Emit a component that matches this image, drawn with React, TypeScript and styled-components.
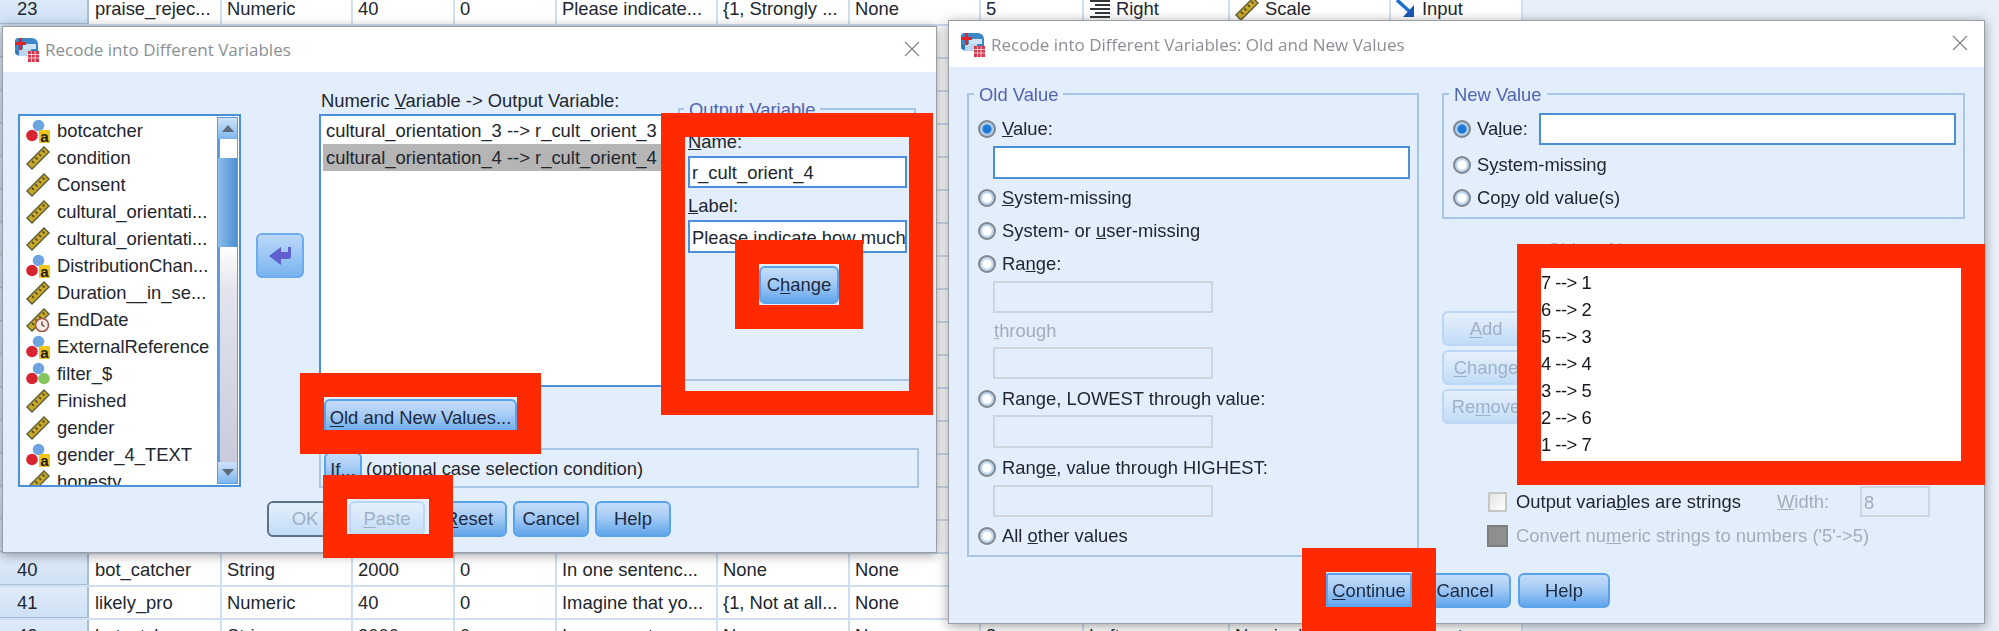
import React from 'react';
import styled, { createGlobalStyle } from 'styled-components';

const GlobalStyle = createGlobalStyle`
  html, body {
    margin: 0;
    padding: 0;
    background: #e7eff9;
    overflow: hidden;
  }
  * { box-sizing: border-box; }
`;

const FONT = `"Liberation Sans", Arial, sans-serif`;

const Canvas = styled.div`
  position: relative;
  width: 1999px;
  height: 631px;
  overflow: hidden;
  font-family: ${FONT};
  font-size: 18.4px;
  color: #22262e;
  background: #e7eff9;
`;

const Scene = styled.div`
  position: absolute;
  inset: 0;
  filter: blur(0.45px);
`;

/* data view behind the dialogs */
const Sheet = styled.div`
  margin-top: -7px;
  width: 1523px;
  background: #fff;
`;

const SheetRow = styled.div`
  display: grid;
  grid-template-columns: 90px 132px 131px 102px 102px 161px 132px 131px 103px 146px 161px 132px;
  height: 33px;
  border-bottom: 2px solid #cfdff1;
`;

const RowHead = styled.div`
  display: flex;
  align-items: center;
  padding: 1px 0 0 17px;
  background: linear-gradient(#e0ebf9, #cfe1f6);
  border-right: 2px solid #a9bfd8;
  border-bottom: 1px solid #a9bfd8;
  margin-right: 1px;
`;

const Cell = styled.div`
  display: flex;
  align-items: center;
  gap: 6px;
  padding: 1px 0 0 5px;
  border-right: 2px solid #cfdff1;
  white-space: nowrap;
  overflow: hidden;
`;

/* dialog windows */
const Window = styled.div<{ $x: number; $y: number; $w: number; $h: number }>`
  position: absolute;
  left: ${(p) => p.$x}px;
  top: ${(p) => p.$y}px;
  width: ${(p) => p.$w}px;
  height: ${(p) => p.$h}px;
  display: flex;
  flex-direction: column;
  background: #e2eefb;
  border: 1px solid #9a9fa6;
  box-shadow: 0 2px 11px rgba(0, 0, 0, 0.38);
`;

const TitleBar = styled.div<{ $h: number }>`
  position: relative;
  display: flex;
  align-items: center;
  flex: none;
  gap: 6px;
  height: ${(p) => p.$h}px;
  padding-left: 11px;
  background: #fff;
`;

const TitleText = styled.span`
  font-family: "Open Sans", ${FONT};
  font-size: 17px;
  color: #8b8f95;
  white-space: nowrap;
`;

const CloseBox = styled.svg`
  position: absolute;
  right: 16px;
  top: 14px;
  width: 16px;
  height: 16px;
`;

const Icon = styled.svg`
  flex: none;
`;

const Body = styled.div<{ $pad: string }>`
  flex: 1;
  display: flex;
  flex-direction: column;
  padding: ${(p) => p.$pad};
`;

const Columns = styled.div<{ $gap?: number; $top?: number }>`
  display: flex;
  align-items: flex-start;
  gap: ${(p) => p.$gap ?? 0}px;
  margin-top: ${(p) => p.$top ?? 0}px;
`;

const ButtonRow = styled.div<{ $top: number; $left: number; $gap: number }>`
  display: flex;
  gap: ${(p) => p.$gap}px;
  margin-top: ${(p) => p.$top}px;
  padding-left: ${(p) => p.$left}px;
`;

/* buttons */
const Btn = styled.div<{ $w: number; $h: number; $off?: boolean; $square?: boolean; $dark?: boolean; $m?: string }>`
  display: flex;
  align-items: center;
  justify-content: center;
  flex: none;
  width: ${(p) => p.$w}px;
  height: ${(p) => p.$h}px;
  margin: ${(p) => p.$m ?? '0'};
  border-radius: ${(p) => (p.$square ? 2 : 6)}px;
  border: 2px solid ${(p) => (p.$dark ? '#5e7287' : p.$off ? '#bcd7f4' : '#5aa2ea')};
  background: ${(p) =>
    p.$off
      ? 'linear-gradient(#e6f0fb, #c2dcf7)'
      : 'linear-gradient(#c3dcfa 0%, #a9cdf6 40%, #62a6ea 100%)'};
  color: ${(p) => (p.$off ? '#9eb0c5' : '#1d2a40')};
  white-space: nowrap;
  u { text-underline-offset: 2px; }
`;

/* variable list with scrollbar */
const VarBox = styled.div`
  display: flex;
  flex: none;
  width: 223px;
  height: 373px;
  margin-top: 24px;
  background: #fff;
  border: 2px solid #4a8fd8;
`;

const VarItems = styled.div`
  flex: 1;
  min-width: 0;
  padding: 1px 0 0 6px;
  overflow: hidden;
`;

const VarItem = styled.div`
  display: flex;
  align-items: center;
  gap: 7px;
  height: 27px;
  white-space: nowrap;
`;

const Scrollbar = styled.div`
  display: flex;
  flex-direction: column;
  flex: none;
  width: 21px;
  margin: 1px 1px 1px 0;
  border: 1px solid #5c9ddf;
`;

const ScrollEnd = styled.div`
  display: flex;
  align-items: center;
  justify-content: center;
  flex: none;
  height: 21px;
  background: linear-gradient(#cfe3fa, #7db6ee);
`;

const ScrollSpace = styled.div<{ $h: number }>`
  flex: none;
  height: ${(p) => p.$h}px;
  background: #fff;
  border-left: 2px solid #5c9ddf;
`;

const ScrollThumb = styled.div`
  flex: none;
  height: 89px;
  background: linear-gradient(90deg, #8cbcea, #4e90d2);
`;

const ScrollRest = styled.div`
  flex: 1;
  background: linear-gradient(#fff 0%, #e3e4ee 20%, #c9cbdc 100%);
  border-left: 2px solid #5c9ddf;
`;

const TriUp = styled.div`
  width: 0;
  height: 0;
  border-left: 6px solid transparent;
  border-right: 6px solid transparent;
  border-bottom: 7px solid #5f6a78;
`;

const TriDown = styled(TriUp)`
  border-bottom: 0;
  border-top: 7px solid #5f6a78;
`;

const ArrowButton = styled.div`
  display: flex;
  align-items: center;
  justify-content: center;
  flex: none;
  width: 48px;
  height: 45px;
  margin: 143px 15px 0;
  border-radius: 6px;
  border: 2px solid #6cabec;
  background: linear-gradient(#bcd8f9, #79b4ef);
`;

const RightPane = styled.div`
  display: flex;
  flex-direction: column;
  width: 600px;
`;

const PaneTop = styled.div`
  display: flex;
  gap: 10px;
`;

const TargetCol = styled.div`
  display: flex;
  flex-direction: column;
  width: 349px;
`;

const FieldLabel = styled.div<{ $top?: number; $left?: number; $off?: boolean }>`
  height: 22px;
  line-height: 22px;
  margin-top: ${(p) => p.$top ?? 0}px;
  margin-left: ${(p) => p.$left ?? 0}px;
  white-space: nowrap;
  color: ${(p) => (p.$off ? '#a3adba' : 'inherit')};
`;

const ListBox = styled.div<{ $h: number; $top?: number }>`
  flex: none;
  height: ${(p) => p.$h}px;
  margin-top: ${(p) => p.$top ?? 2}px;
  padding: 1px 2px;
  background: #fff;
  border: 2px solid #4a8fd8;
`;

const RecodeList = styled.div`
  flex: none;
  width: 424px;
  height: 197px;
  padding: 2px;
  background: #fff;
`;

const ListRow = styled.div<{ $sel?: boolean }>`
  height: 27px;
  line-height: 27px;
  padding-left: 3px;
  white-space: nowrap;
  background: ${(p) => (p.$sel ? '#b5b5b5' : 'transparent')};
`;

const RecodeRow = styled.div`
  height: 27px;
  line-height: 27px;
  letter-spacing: -0.5px;
  white-space: nowrap;
  color: #14171c;
`;

const Group = styled.fieldset<{ $w: number; $h: number; $top?: number; $left: number }>`
  flex: none;
  display: flex;
  flex-direction: column;
  width: ${(p) => p.$w}px;
  height: ${(p) => p.$h}px;
  margin: ${(p) => p.$top ?? 0}px 0 0;
  padding: 8px 7px 0 ${(p) => p.$left}px;
  min-width: 0;
  border: 2px solid #a8c6e8;
`;

const Legend = styled.legend`
  height: 20px;
  line-height: 21px;
  margin-left: -4px;
  padding: 0 5px;
  color: #5163b3;
`;

const TextBox = styled.div<{ $w: number; $h: number; $top?: number; $left?: number | 'auto'; $off?: boolean }>`
  flex: none;
  width: ${(p) => p.$w}px;
  height: ${(p) => p.$h}px;
  margin-top: ${(p) => p.$top ?? 0}px;
  margin-left: ${(p) => (p.$left === 'auto' ? 'auto' : `${p.$left ?? 0}px`)};
  padding-left: 2px;
  line-height: ${(p) => p.$h - 2}px;
  overflow: hidden;
  white-space: nowrap;
  color: ${(p) => (p.$off ? '#a3adba' : 'inherit')};
  background: ${(p) => (p.$off ? 'transparent' : '#fff')};
  border: 2px solid ${(p) => (p.$off ? '#cfd5dc' : '#4a8fd8')};
`;

const IfRow = styled.div`
  display: flex;
  align-items: stretch;
  gap: 4px;
  height: 40px;
  margin-top: 12px;
  padding: 2px 0 0 3px;
  border: 2px solid #a8c6e8;
`;

const IfText = styled.span`
  line-height: 34px;
  white-space: nowrap;
`;

/* radios and checks */
const Option = styled.div<{ $top?: number }>`
  display: flex;
  align-items: center;
  gap: 6px;
  flex: none;
  height: 33px;
  margin-top: ${(p) => p.$top ?? 0}px;
  white-space: nowrap;
`;

const Radio = styled.span<{ $on?: boolean }>`
  flex: none;
  width: 18px;
  height: 18px;
  border-radius: 50%;
  border: 2px solid #7f868e;
  background: ${(p) =>
    p.$on
      ? 'radial-gradient(circle, #1f78d6 0 4px, #a9cdf2 5px, #bfc6ce 100%)'
      : 'radial-gradient(circle, #fff 0 4px, #bcd7f2 5.5px, #c4cad1 100%)'};
`;

const Check = styled.span<{ $off?: boolean }>`
  display: block;
  width: ${(p) => (p.$off ? 21 : 19)}px;
  height: ${(p) => (p.$off ? 22 : 20)}px;
  margin-left: ${(p) => (p.$off ? -1 : 0)}px;
  border: 2px solid ${(p) => (p.$off ? '#7d7d7d' : '#c6c6c6')};
  background: ${(p) => (p.$off ? '#8f8f8f' : 'linear-gradient(135deg, #e4e4e4, #fff)')};
`;

const CheckRow = styled.div<{ $top?: number }>`
  display: grid;
  grid-template-columns: 28px 261px 83px 70px;
  align-items: center;
  margin-top: ${(p) => p.$top ?? 0}px;
  padding-left: 46px;
  white-space: nowrap;
`;

const StackedButtons = styled.div`
  display: flex;
  flex-direction: column;
  flex: none;
  gap: 4px;
  padding-top: 67px;
`;

const RecodeCol = styled.div`
  display: flex;
  flex-direction: column;
  flex: none;
  margin-left: 9px;
`;

const PeekLabel = styled(FieldLabel)`
  margin: -5px 0 6px 8px;
`;

const RightStack = styled.div`
  display: flex;
  flex-direction: column;
`;

const RedFrame = styled.div<{ $x: number; $y: number; $w: number; $h: number }>`
  position: absolute;
  left: ${(p) => p.$x}px;
  top: ${(p) => p.$y}px;
  width: ${(p) => p.$w}px;
  height: ${(p) => p.$h}px;
  border: 24px solid #ff2a00;
`;

/* icons */
const AppIcon = () => (
  <Icon width="25" height="25" viewBox="0 0 25 25">
    <path d="M3 1h15a6 6 0 0 1 6 6v12H6a5 5 0 0 1-5-5V3z" fill="#3f88c8" />
    <path d="M1 13h23v4H8l-7 0z" fill="#2c6ea8" opacity=".6" />
    <rect x="9" y="7" width="13" height="5" fill="#cfe2f3" />
    <rect x="5" y="12" width="12" height="7" fill="#bcd6ee" />
    <path d="M5 1h3v4h4v3H8v5H5V8H1V5h4z" fill="#e0232b" />
    <rect x="14" y="14" width="11" height="11" fill="#d8344a" />
    <path d="M14 17.5h11M14 21h11M17.5 14v11M21 14v11" stroke="#f5c4cc" strokeWidth="1" />
  </Icon>
);

const RulerIcon = ({ clock }: { clock?: boolean }) => (
  <Icon width="24" height="24" viewBox="0 0 24 24">
    <path d="M1 18 18 1l5 5L6 23z" fill="#c8a92a" stroke="#5c5a35" strokeWidth="1.4" />
    <path d="M6 15l2 2M9.5 11.5l2 2M13 8l2 2M16.5 4.5l2 2" stroke="#3f3d22" strokeWidth="1.5" />
    {clock && (
      <g>
        <circle cx="16" cy="17" r="6.5" fill="#f3ece6" stroke="#a2564a" strokeWidth="1.5" />
        <path d="M16 13.5V17l2.5 1.5" stroke="#5a2b26" strokeWidth="1.2" fill="none" />
      </g>
    )}
  </Icon>
);

const BallsIcon = ({ numeric }: { numeric?: boolean }) => (
  <Icon width="24" height="24" viewBox="0 0 24 24">
    <circle cx="12.5" cy="6.5" r="5.8" fill="#6ea4e0" />
    <circle cx="6" cy="16.5" r="5.8" fill="#d7242f" />
    {numeric ? (
      <circle cx="18" cy="16.5" r="5.8" fill="#86c45f" />
    ) : (
      <g>
        <rect x="13" y="11" width="11" height="13" rx="1" fill="#f0c419" />
        <text x="18.5" y="22.5" textAnchor="middle" fontSize="15" fontWeight="700" fontFamily={FONT} fill="#1b1b1b">
          a
        </text>
      </g>
    )}
  </Icon>
);

const AlignRightIcon = () => (
  <Icon width="21" height="20" viewBox="0 0 21 20">
    <path d="M1 2h20M6 6h15M1 10h20M6 14h15M1 18h20" stroke="#33363a" strokeWidth="2.2" />
  </Icon>
);

const InputIcon = () => (
  <Icon width="20" height="20" viewBox="0 0 20 20">
    <path d="M1 1l12 11" stroke="#1f6fd0" strokeWidth="3.4" />
    <path d="M18 6v12H7z" fill="#1559b5" />
  </Icon>
);

const BackArrow = () => (
  <Icon width="24" height="20" viewBox="0 0 24 20">
    <path d="M1 10 13 1v5h7V1h3v9c0 2-1 3-3 3h-7v6z" fill="#5f5fcf" />
  </Icon>
);

const CloseIcon = () => (
  <CloseBox viewBox="0 0 16 16">
    <path d="M1 1l14 14M15 1 1 15" stroke="#7c7f84" strokeWidth="1.1" />
  </CloseBox>
);

/* data */
type VarKind = 'string' | 'scale' | 'date' | 'nominal';

const VARS: { kind: VarKind; name: string }[] = [
  { kind: 'string', name: 'botcatcher' },
  { kind: 'scale', name: 'condition' },
  { kind: 'scale', name: 'Consent' },
  { kind: 'scale', name: 'cultural_orientati...' },
  { kind: 'scale', name: 'cultural_orientati...' },
  { kind: 'string', name: 'DistributionChan...' },
  { kind: 'scale', name: 'Duration__in_se...' },
  { kind: 'date', name: 'EndDate' },
  { kind: 'string', name: 'ExternalReference' },
  { kind: 'nominal', name: 'filter_$' },
  { kind: 'scale', name: 'Finished' },
  { kind: 'scale', name: 'gender' },
  { kind: 'string', name: 'gender_4_TEXT' },
  { kind: 'scale', name: 'honesty' },
];

const varIcon = (kind: VarKind) => {
  if (kind === 'string') return <BallsIcon />;
  if (kind === 'nominal') return <BallsIcon numeric />;
  return <RulerIcon clock={kind === 'date'} />;
};

const SHEET: Record<number, string[]> = {
  23: ['praise_rejec...', 'Numeric', '40', '0', 'Please indicate...', '{1, Strongly ...', 'None', '5', 'Right', 'Scale', 'Input'],
  40: ['bot_catcher', 'String', '2000', '0', 'In one sentenc...', 'None', 'None', '8', 'Left', 'Nominal', 'Input'],
  41: ['likely_pro', 'Numeric', '40', '0', 'Imagine that yo...', '{1, Not at all...', 'None', '5', 'Right', 'Scale', 'Input'],
  42: ['botcatcher', 'String', '2000', '0', 'In one sentenc...', 'None', 'None', '8', 'Left', 'Nominal', 'Input'],
};

const ROW_NUMBERS = Array.from({ length: 20 }, (_, i) => 23 + i);
const EMPTY_ROW = Array.from({ length: 11 }, () => '');
const RECODES = ['7 --> 1', '6 --> 2', '5 --> 3', '4 --> 4', '3 --> 5', '2 --> 6', '1 --> 7'];

const FRAMES = [
  { x: 661, y: 113, w: 272, h: 302 },
  { x: 735, y: 240, w: 128, h: 89 },
  { x: 300, y: 373, w: 241, h: 81 },
  { x: 323, y: 475, w: 130, h: 83 },
  { x: 1302, y: 548, w: 134, h: 83 },
  { x: 1517, y: 244, w: 468, h: 241 },
];

const SheetCell = ({ col, text }: { col: number; text: string }) => (
  <Cell>
    {col === 8 && text === 'Right' && <AlignRightIcon />}
    {col === 9 && text === 'Scale' && <RulerIcon />}
    {col === 10 && text && <InputIcon />}
    {text}
  </Cell>
);

const RecodeDialog = () => (
  <Window $x={2} $y={26} $w={935} $h={527}>
    <TitleBar $h={45}>
      <AppIcon />
      <TitleText>Recode into Different Variables</TitleText>
      <CloseIcon />
    </TitleBar>
    <Body $pad="18px 0 0 15px">
      <Columns>
        <VarBox>
          <VarItems>
            {VARS.map((v, i) => (
              <VarItem key={i}>
                {varIcon(v.kind)}
                {v.name}
              </VarItem>
            ))}
          </VarItems>
          <Scrollbar>
            <ScrollEnd>
              <TriUp />
            </ScrollEnd>
            <ScrollSpace $h={19} />
            <ScrollThumb />
            <ScrollRest />
            <ScrollEnd>
              <TriDown />
            </ScrollEnd>
          </Scrollbar>
        </VarBox>
        <ArrowButton>
          <BackArrow />
        </ArrowButton>
        <RightPane>
          <PaneTop>
            <TargetCol>
              <FieldLabel $left={2}>
                Numeric <u>V</u>ariable -&gt; Output Variable:
              </FieldLabel>
              <ListBox $h={273}>
                <ListRow>cultural_orientation_3 --&gt; r_cult_orient_3</ListRow>
                <ListRow $sel>cultural_orientation_4 --&gt; r_cult_orient_4</ListRow>
              </ListBox>
            </TargetCol>
            <Group $w={238} $h={282} $top={9} $left={8}>
              <Legend>Output Variable</Legend>
              <FieldLabel $top={4}>
                <u>N</u>ame:
              </FieldLabel>
              <TextBox $w={219} $h={32} $top={3}>
                r_cult_orient_4
              </TextBox>
              <FieldLabel $top={7}>
                <u>L</u>abel:
              </FieldLabel>
              <TextBox $w={219} $h={33} $top={3}>
                Please indicate how much
              </TextBox>
              <Btn $w={80} $h={38} $m="13px 0 0 71px">
                C<u>h</u>ange
              </Btn>
            </Group>
          </PaneTop>
          <Btn $w={193} $h={37} $m="12px 0 0 5px">
            <span>
              <u>O</u>ld and New Values...
            </span>
          </Btn>
          <IfRow>
            <Btn $w={38} $h={36}>
              If...
            </Btn>
            <IfText>(optional case selection condition)</IfText>
          </IfRow>
        </RightPane>
      </Columns>
      <ButtonRow $top={13} $left={249} $gap={6}>
        <Btn $w={76} $h={36} $off $dark>
          OK
        </Btn>
        <Btn $w={76} $h={36} $off>
          <u>P</u>aste
        </Btn>
        <Btn $w={76} $h={36}>
          <u>R</u>eset
        </Btn>
        <Btn $w={76} $h={36}>
          Cancel
        </Btn>
        <Btn $w={76} $h={36}>
          Help
        </Btn>
      </ButtonRow>
    </Body>
  </Window>
);

const ValuesDialog = () => (
  <Window $x={948} $y={20} $w={1037} $h={604}>
    <TitleBar $h={46}>
      <AppIcon />
      <TitleText>Recode into Different Variables: Old and New Values</TitleText>
      <CloseIcon />
    </TitleBar>
    <Body $pad="17px 0 0 18px">
      <Columns $gap={23}>
        <Group $w={452} $h={473} $left={9}>
          <Legend>Old Value</Legend>
          <Option>
            <Radio $on />
            <span>
              <u>V</u>alue:
            </span>
          </Option>
          <TextBox $w={417} $h={33} $top={1} $left={15} />
          <Option $top={2}>
            <Radio />
            <span>
              <u>S</u>ystem-missing
            </span>
          </Option>
          <Option>
            <Radio />
            <span>
              System- or <u>u</u>ser-missing
            </span>
          </Option>
          <Option>
            <Radio />
            <span>
              Ra<u>n</u>ge:
            </span>
          </Option>
          <TextBox $w={220} $h={32} $top={1} $left={15} $off />
          <FieldLabel $top={7} $left={16} $off>
            <u>t</u>hrough
          </FieldLabel>
          <TextBox $w={220} $h={32} $top={5} $left={15} $off />
          <Option $top={3}>
            <Radio />
            <span>
              Ran<u>g</u>e, LOWEST through value:
            </span>
          </Option>
          <TextBox $w={220} $h={33} $left={15} $off />
          <Option $top={3}>
            <Radio />
            <span>
              Rang<u>e</u>, value through HIGHEST:
            </span>
          </Option>
          <TextBox $w={220} $h={32} $top={1} $left={15} $off />
          <Option $top={2}>
            <Radio />
            <span>
              All <u>o</u>ther values
            </span>
          </Option>
        </Group>
        <RightStack>
          <Group $w={523} $h={135} $left={9}>
            <Legend>New Value</Legend>
            <Option>
              <Radio $on />
              <span>
                Va<u>l</u>ue:
              </span>
              <TextBox $w={417} $h={32} $left="auto" />
            </Option>
            <Option $top={3}>
              <Radio />
              <span>
                S<u>y</u>stem-missing
              </span>
            </Option>
            <Option>
              <Radio />
              <span>
                Co<u>p</u>y old value(s)
              </span>
            </Option>
          </Group>
          <Columns $top={25}>
            <StackedButtons>
              <Btn $w={88} $h={35} $off>
                <u>A</u>dd
              </Btn>
              <Btn $w={88} $h={35} $off>
                <span>
                  <u>C</u>hange
                </span>
              </Btn>
              <Btn $w={88} $h={35} $off>
                Re<u>m</u>ove
              </Btn>
            </StackedButtons>
            <RecodeCol>
              <PeekLabel $off>Old --&gt; New:</PeekLabel>
              <RecodeList>
                {RECODES.map((r) => (
                  <RecodeRow key={r}>{r}</RecodeRow>
                ))}
              </RecodeList>
            </RecodeCol>
          </Columns>
          <CheckRow $top={22}>
            <Check />
            <span>
              Output varia<u>b</u>les are strings
            </span>
            <FieldLabel $off>
              <u>W</u>idth:
            </FieldLabel>
            <TextBox $w={70} $h={31} $off>
              8
            </TextBox>
          </CheckRow>
          <CheckRow $top={8}>
            <Check $off />
            <FieldLabel $off>
              Convert nu<u>m</u>eric strings to numbers ('5'-&gt;5)
            </FieldLabel>
          </CheckRow>
        </RightStack>
      </Columns>
      <ButtonRow $top={16} $left={359} $gap={7}>
        <Btn $w={86} $h={35} $square>
          <u>C</u>ontinue
        </Btn>
        <Btn $w={92} $h={35}>
          Cancel
        </Btn>
        <Btn $w={92} $h={35}>
          Help
        </Btn>
      </ButtonRow>
    </Body>
  </Window>
);

export default function App() {
  return (
    <Canvas>
      <GlobalStyle />
      <Scene>
        <Sheet>
          {ROW_NUMBERS.map((n) => (
            <SheetRow key={n}>
              <RowHead>{n}</RowHead>
              {(SHEET[n] ?? EMPTY_ROW).map((text, col) => (
                <SheetCell key={col} col={col} text={text} />
              ))}
            </SheetRow>
          ))}
        </Sheet>
        <RecodeDialog />
        <ValuesDialog />
      </Scene>
      {FRAMES.map((f) => (
        <RedFrame key={f.x} $x={f.x} $y={f.y} $w={f.w} $h={f.h} />
      ))}
    </Canvas>
  );
}
